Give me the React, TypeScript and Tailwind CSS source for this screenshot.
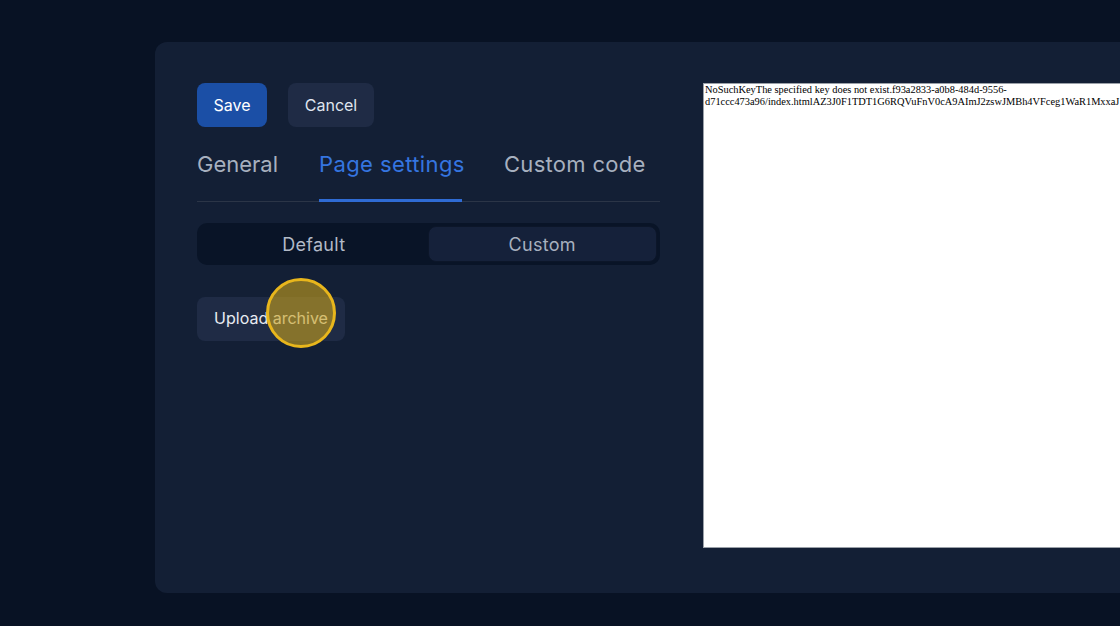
import React from "react";

export default function App() {
  return (
    <div className="w-[1120px] h-[626px] bg-[#081224] overflow-hidden pt-[42px] pl-[155px]" style={{ fontFamily: "Inter, 'Noto Sans', sans-serif" }}>
      <div className="w-[1000px] h-[551px] bg-[#131f35] rounded-[12px] flex pt-[41px] pl-[42px]">
        <div className="w-[463px] shrink-0 flex flex-col">
          <div className="flex gap-[21px]">
            <button className="h-[44px] w-[70px] rounded-[8px] bg-[#1b4fa6] text-white text-[16px]">Save</button>
            <button className="h-[44px] w-[86px] rounded-[8px] bg-[#1f2b45] text-[#dfe5ee] text-[16px]">Cancel</button>
          </div>
          <div className="flex mt-[16px] border-b border-[#2b3547] h-[59px] whitespace-nowrap">
            <div className="w-[80px] text-[22px] text-[#a7b0bf] pt-[5px]">General</div>
            <div className="ml-[42px] w-[143px] text-center text-[22px] tracking-[0.4px] text-[#3575e0] pt-[5px] border-b-[3px] border-[#2f6bd4] mb-[-1px]">Page settings</div>
            <div className="ml-[42px] w-[140px] text-[22px] tracking-[0.3px] text-[#a7b0bf] pt-[5px]">Custom code</div>
          </div>
          <div className="mt-[21px] h-[42px] rounded-[10px] bg-[#091427] flex p-[3px]">
            <div className="flex-1 flex items-center justify-center text-[18px] tracking-[0.3px] text-[#b2bac7]">Default</div>
            <div className="flex-1 flex items-center justify-center text-[18px] tracking-[0.3px] text-[#a7b0bf] bg-[#15213a] rounded-[8px] border border-[#0c1629]">Custom</div>
          </div>
          <div className="mt-[32px] relative">
            <button className="h-[44px] w-[148px] rounded-[8px] bg-[#1f2b45] text-[#e8ecf2] text-[16px] pb-[3px]">Upload archive</button>
            <div className="absolute left-[69px] top-[-19px] w-[70px] h-[70px] rounded-full border-[3px] border-[#e8b61c] bg-[#c9a21c]/60" />
          </div>
        </div>
        <div className="ml-[43px] w-[500px] shrink-0 h-[465px] bg-white border border-[#9aa0a8] px-[1px] text-[10.4px] leading-[11.5px] text-black overflow-hidden" style={{ fontFamily: "'Liberation Serif', serif" }}>
          <div className="whitespace-nowrap">NoSuchKeyThe specified key does not exist.f93a2833-a0b8-484d-9556-</div>
          <div className="whitespace-nowrap">d71ccc473a96/index.htmlAZ3J0F1TDT1G6RQVuFnV0cA9AImJ2zswJMBh4VFceg1WaR1MxxaJ</div>
        </div>
      </div>
    </div>
  );
}
